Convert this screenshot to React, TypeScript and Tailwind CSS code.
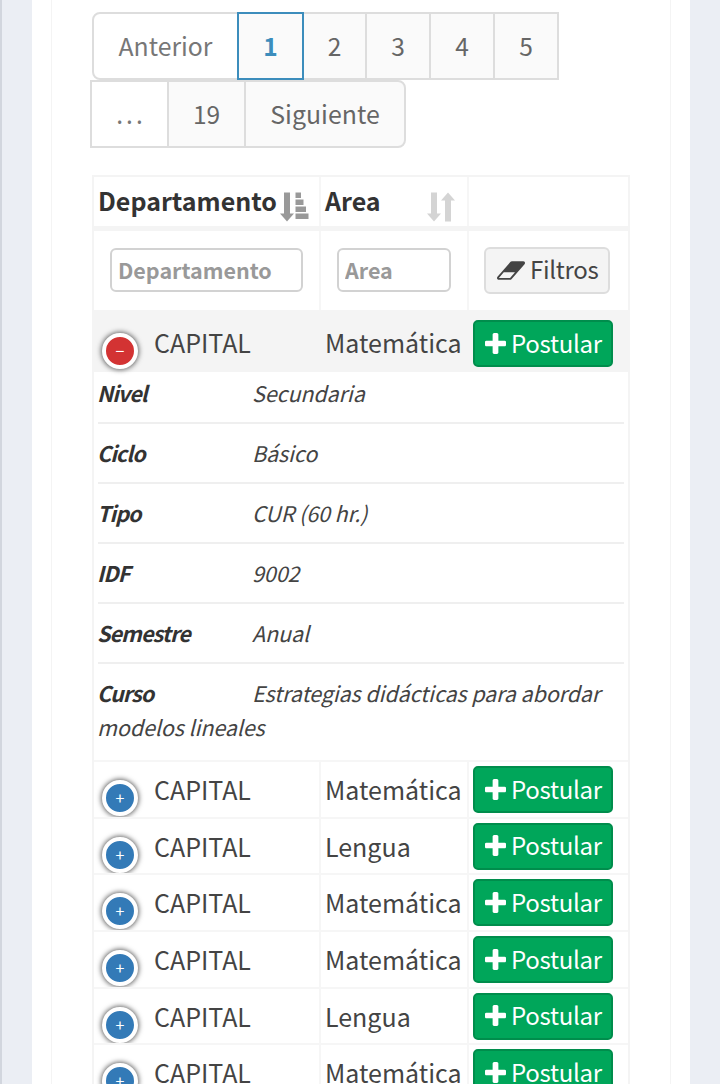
import React from 'react'
import clsx from 'clsx'

interface Row {
  departamento: string
  area: string
}

const expandedRow: Row = { departamento: 'CAPITAL', area: 'Matemática' }

const details = [
  { label: 'Nivel', value: 'Secundaria' },
  { label: 'Ciclo', value: 'Básico' },
  { label: 'Tipo', value: 'CUR (60 hr.)' },
  { label: 'IDF', value: '9002' },
  { label: 'Semestre', value: 'Anual' },
  { label: 'Curso', value: 'Estrategias didácticas para abordar modelos lineales' },
]

const rows: Row[] = [
  { departamento: 'CAPITAL', area: 'Matemática' },
  { departamento: 'CAPITAL', area: 'Lengua' },
  { departamento: 'CAPITAL', area: 'Matemática' },
  { departamento: 'CAPITAL', area: 'Matemática' },
  { departamento: 'CAPITAL', area: 'Lengua' },
  { departamento: 'CAPITAL', area: 'Matemática' },
]

const PlusIcon = () => (
  <svg viewBox="192 128 1408 1408" className="-mt-px h-[21px] w-[21px] shrink-0" fill="currentColor">
    <path d="M1600 736v192q0 40-28 68t-68 28h-416v416q0 40-28 68t-68 28h-192q-40 0-68-28t-28-68v-416h-416q-40 0-68-28t-28-68v-192q0-40 28-68t68-28h416v-416q0-40 28-68t68-28h192q40 0 68 28t28 68v416h416q40 0 68 28t28 68z" />
  </svg>
)

const EraserIcon = () => (
  <svg viewBox="0 256 1920 1280" className="-mt-px h-[19px] w-[28px] shrink-0" fill="currentColor">
    <path d="M896 1408l336-384h-768l-336 384h768zM1909 331q15 34 9.5 71.5t-30.5 65.5l-896 1024q-38 44-96 44h-768q-38 0-69.5-20.5t-47.5-54.5q-15-34-9.5-71.5t30.5-65.5l896-1024q38-44 96-44h768q38 0 69.5 20.5t47.5 54.5z" />
  </svg>
)

const SortAscIcon = () => (
  <svg viewBox="0 0 29 30" className="h-[30px] w-[29px]" fill="#999999">
    <path d="M4 0.5h6v21h4L7 29.5 0 21.5h4z" />
    <path d="M15.5 0.5h5.5v5.5h-5.5zM15.5 7.5h8v5.5h-8zM15.5 14.5h10.5v5.5h-10.5zM15.5 21.5h13v5.5h-13z" />
  </svg>
)

const SortBothIcon = () => (
  <svg viewBox="0 0 28 30" className="h-[30px] w-[28px]" fill="#d4d4d4">
    <path d="M4 0.5h6v21h4L7 29.5 0 21.5h4z" />
    <path d="M18 29.5h6V8.5h4L21 0.5 14 8.5h4z" />
  </svg>
)

const PageItem = ({ className, children }: { className: string; children: React.ReactNode }) => (
  <li className={clsx('flex h-[68px] items-center justify-center border-2 border-[#dddddd] text-[24.5px] leading-none', className)}>
    {children}
  </li>
)

const Pagination = () => (
  <nav className="text-[#666666]">
    <ul className="ml-[2px] flex">
      <PageItem className="w-[147px] rounded-l-lg bg-white pb-[2px] text-[24.8px]! text-[#777777]">Anterior</PageItem>
      <PageItem className="relative -ml-[2px] w-[67px] border-[#3c8dbc]! bg-[#fafafa] font-bold text-[#3c8dbc]">1</PageItem>
      <PageItem className="-ml-[2px] w-[65px] bg-[#fafafa]">2</PageItem>
      <PageItem className="-ml-[2px] w-[66px] bg-[#fafafa]">3</PageItem>
      <PageItem className="-ml-[2px] w-[66px] bg-[#fafafa]">4</PageItem>
      <PageItem className="-ml-[2px] w-[66px] bg-[#fafafa]">5</PageItem>
    </ul>
    <ul className="flex">
      <PageItem className="w-[79px] bg-white pl-[3px] tracking-[3.1px] text-[#777777]">...</PageItem>
      <PageItem className="-ml-[2px] w-[79px] bg-[#fafafa]">19</PageItem>
      <PageItem className="-ml-[2px] w-[162px] rounded-r-lg bg-[#fafafa] pb-[2px] text-[24.9px]!">Siguiente</PageItem>
    </ul>
  </nav>
)

const TogglePill = ({ open }: { open?: boolean }) => (
  <span
    className={clsx(
      'mt-[18px] flex h-9 w-9 shrink-0 justify-center rounded-full border-4 border-white text-[16px] leading-[26px] text-white shadow-[0_0_5px_1px_#666]',
      open ? 'bg-[#d33333]' : 'bg-[#337ab7]',
    )}
  >
    {open ? '−' : '+'}
  </span>
)

const TableRow = ({ row, open }: { row: Row; open?: boolean }) => (
  <div
    className={clsx(
      'grid grid-cols-[225px_148px_1fr] text-[25px] leading-[36px]',
      open ? 'h-[62px] bg-[#f4f4f4] pt-[5px]' : 'h-[56.7px] border-t-2 border-[#f6f6f6]',
    )}
  >
    <div className={clsx('flex pl-2', !open && 'overflow-hidden')}>
      <TogglePill open={open} />
      <span className="ml-4 mt-[9px]">{row.departamento}</span>
    </div>
    <div className={clsx('border-l-2 pl-1 pt-[9px]', open ? 'border-transparent' : 'border-[#f6f6f6]')}>{row.area}</div>
    <div className={clsx('border-l-2 pl-1', open ? 'border-transparent pt-[5px]' : 'border-[#f6f6f6] pt-1')}>
      <button className="flex h-[47px] w-[140px] items-center rounded-[5px] border-2 border-[#008d4c] bg-[#00a65a] pl-[10px] text-[24px] leading-none text-white">
        <PlusIcon />
        <span className="-mt-[2px] ml-[5px] tracking-[-0.3px]">Postular</span>
      </button>
    </div>
  </div>
)

const TableHead = () => (
  <>
    <div className="grid h-[49px] grid-cols-[225px_148px_1fr] text-[25px] font-bold leading-[36px] text-[#333333]">
      <div className="flex pl-1 pt-[5px]">
        Departamento
        <span className="ml-[3px] mt-[10px]">
          <SortAscIcon />
        </span>
      </div>
      <div className="flex justify-between border-l-2 border-[#f6f6f6] pl-1 pr-3 pt-[5px]">
        Area
        <span className="mt-[10px]">
          <SortBothIcon />
        </span>
      </div>
      <div className="border-l-2 border-[#f6f6f6]" />
    </div>
    <div className="grid h-[84px] grid-cols-[225px_148px_1fr] border-t-5 border-[#f4f4f4]">
      <div className="pl-4 pt-[17px]">
        <input
          className="block h-[44px] w-[193px] rounded-md border-2 border-[#d2d2d2] px-[6px] pb-[2px] text-[21.5px] font-bold placeholder:text-[#999999]"
          placeholder="Departamento"
        />
      </div>
      <div className="border-l-2 border-[#f6f6f6] pl-4 pt-[17px]">
        <input
          className="block h-[44px] w-[114px] rounded-md border-2 border-[#d2d2d2] px-[6px] pb-[2px] text-[21.5px] font-bold placeholder:text-[#999999]"
          placeholder="Area"
        />
      </div>
      <div className="border-l-2 border-[#f6f6f6] pl-[15px] pt-4">
        <button className="flex h-[47px] w-[126px] items-center rounded-md border-2 border-[#dddddd] bg-[#f4f4f4] pl-[11px] text-[24px] leading-none text-[#444444]">
          <EraserIcon />
          <span className="-mt-[3px] ml-[5px] tracking-[-0.3px]">Filtros</span>
        </button>
      </div>
    </div>
  </>
)

const RowDetails = () => (
  <dl className="h-[388px] px-1 text-[21.5px] italic leading-[34px]">
    {details.map((item) => (
      <div key={item.label} className="h-[60px] border-b-2 border-[#efefef] pt-3 first:h-[52px] first:pt-1 last:border-b-0">
        <dt className="float-left -ml-px w-[155px] font-bold tracking-[-0.9px] text-[#333333]">{item.label}</dt>
        <dd className="-ml-px tracking-[-0.1px]">{item.value}</dd>
      </div>
    ))}
  </dl>
)

export default function App() {
  return (
    <div className="flex h-[1084px] w-[720px] overflow-hidden border-l-2 border-[#d2d6de] bg-[#ebeef4] pl-[30px] font-['Noto_Sans_CJK_SC','Noto_Sans',sans-serif] text-[#444444]">
      <div className="w-[658px] bg-white px-[19px]">
        <div className="h-[1084px] border-x border-[#f4f4f4] pl-[38px] pt-3">
          <Pagination />
          <div className="ml-[2px] mt-[27px] w-[538px] border-2 border-[#f4f4f4]">
            <TableHead />
            <TableRow row={expandedRow} open />
            <RowDetails />
            {rows.map((row, i) => (
              <TableRow key={i} row={row} />
            ))}
          </div>
        </div>
      </div>
    </div>
  )
}
